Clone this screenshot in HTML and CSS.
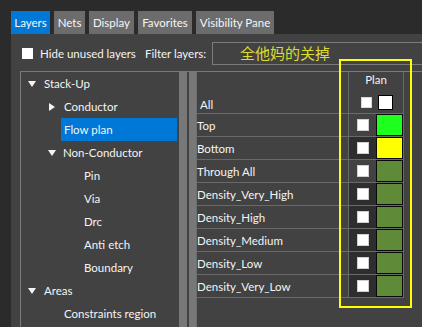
FILE: index.html
```html
<!DOCTYPE html>
<html>
<head>
<meta charset="utf-8">
<link rel="stylesheet" href="styles.css">
</head>
<body>
<div class="app">
  <div class="tabs">
    <div class="tab active t-layers">Layers</div>
    <div class="tab t-nets">Nets</div>
    <div class="tab t-display">Display</div>
    <div class="tab t-fav">Favorites</div>
    <div class="tab t-vis">Visibility Pane</div>
  </div>
  <div class="panel">
    <div class="toolbar">
      <span class="cb-hide"></span>
      <span class="lbl hide-lbl">Hide unused layers</span>
      <span class="lbl filter-lbl">Filter layers:</span>
      <div class="filter">全他妈的关掉</div>
    </div>
    <div class="main">
      <div class="tree">
        <div class="trow lv0"><span class="arrow down"></span><span>Stack-Up</span></div>
        <div class="trow lv1"><span class="arrow right"></span><span>Conductor</span></div>
        <div class="trow sel-row"><span class="sel">Flow plan</span></div>
        <div class="trow lv1b"><span class="arrow down"></span><span>Non-Conductor</span></div>
        <div class="trow lv2"><span>Pin</span></div>
        <div class="trow lv2"><span>Via</span></div>
        <div class="trow lv2"><span>Drc</span></div>
        <div class="trow lv2"><span>Anti etch</span></div>
        <div class="trow lv2"><span>Boundary</span></div>
        <div class="trow lv0"><span class="arrow down"></span><span>Areas</span></div>
        <div class="trow lv1t"><span>Constraints region</span></div>
      </div>
      <div class="sb"></div>
      <div class="sb-gap"></div>
      <div class="sb sb2"></div>
      <div class="grid">
        <div class="th">
          <div class="name all">All</div>
          <div class="plan">
            <div class="plan-lbl">Plan</div>
            <div class="all-cbs"><span class="cb-small"></span><span class="cb-big"></span></div>
          </div>
        </div>
        <div class="tr"><div class="name">Top</div><div class="cbcell"><span class="cb"></span></div><div class="swcell"><span class="sw green"></span></div></div>
        <div class="tr"><div class="name">Bottom</div><div class="cbcell dark"><span class="cb"></span></div><div class="swcell"><span class="sw yellow"></span></div></div>
        <div class="tr"><div class="name">Through All</div><div class="cbcell"><span class="cb"></span></div><div class="swcell"><span class="sw olive"></span></div></div>
        <div class="tr"><div class="name">Density_Very_High</div><div class="cbcell dark"><span class="cb"></span></div><div class="swcell"><span class="sw olive"></span></div></div>
        <div class="tr"><div class="name">Density_High</div><div class="cbcell dark"><span class="cb"></span></div><div class="swcell"><span class="sw olive"></span></div></div>
        <div class="tr"><div class="name">Density_Medium</div><div class="cbcell dark"><span class="cb"></span></div><div class="swcell"><span class="sw olive"></span></div></div>
        <div class="tr"><div class="name">Density_Low</div><div class="cbcell dark"><span class="cb"></span></div><div class="swcell"><span class="sw olive"></span></div></div>
        <div class="tr"><div class="name">Density_Very_Low</div><div class="cbcell dark"><span class="cb"></span></div><div class="swcell"><span class="sw olive"></span></div></div>
      </div>
    </div>
    <div class="annot"></div>
  </div>
</div>
</body>
</html>
```
FILE: styles.css
```css
* { box-sizing: border-box; }
html, body { margin: 0; padding: 0; }
body {
  width: 422px;
  height: 327px;
  overflow: hidden;
  background: #2b2b2b;
  font-family: Lato, "Noto Sans", sans-serif;
  font-size: 11.5px;
  color: #f4f4f4;
}
.app { padding: 11px 0 0 11px; }
.tabs { display: flex; gap: 4px; height: 23px; }
.tab {
  background: #6c6c6c;
  line-height: 23px;
  text-align: center;
  color: #f6f6f6;
  white-space: nowrap;
  flex: none;
}
.t-layers { width: 39px; }
.t-nets { width: 31px; }
.t-display { width: 45px; }
.t-fav { width: 54px; }
.t-vis { width: 78px; }
.tab.active { background: #0078d7; }
.panel {
  position: relative;
  background: #424242;
  height: 293px;
  overflow: hidden;
}
.toolbar {
  display: flex;
  align-items: center;
  height: 37px;
  padding-left: 11px;
  padding-top: 1px;
}
.cb-hide {
  width: 11px; height: 11px;
  background: #fff;
  flex: none;
}
.lbl { white-space: nowrap; }
.hide-lbl { margin-left: 7px; width: 98px; }
.filter-lbl { margin-left: 7px; width: 60px; }
.filter {
  margin-left: 7px;
  flex: 1;
  height: 23px;
  margin-right: -20px;
  border: 1px solid #7c7c7c;
  padding-left: 27px;
  font-family: "Noto Sans CJK SC", sans-serif;
  font-size: 15px;
  line-height: 20px;
  color: #dcdc2c;
}
.main {
  display: flex;
  margin-left: 9px;
  border-top: 1px solid #7a7a7a;
  border-left: 1px solid #7a7a7a;
  height: 256px;
}
.tree { width: 158px; flex: none; }
.trow {
  height: 23px;
  display: flex;
  align-items: center;
  white-space: nowrap;
}
.lv0 { padding-left: 7px; }
.lv0 .arrow { margin-right: 8px; }
.lv1 { padding-left: 28px; }
.lv1 .arrow { margin-right: 9px; }
.lv1b { padding-left: 27px; }
.lv1b .arrow { margin-right: 7px; border-left-width: 4.5px; border-right-width: 4.5px; }
.lv1t { padding-left: 43px; }
.lv2 { padding-left: 63px; }
.sel-row { padding-left: 40px; padding-right: 2px; }
.sel {
  flex: 1;
  height: 23px;
  line-height: 23px;
  background: #0078d7;
  padding-left: 3px;
}
.arrow { width: 0; height: 0; flex: none; }
.arrow.down {
  border-left: 4px solid transparent;
  border-right: 4px solid transparent;
  border-top: 6px solid #f4f4f4;
}
.arrow.right {
  border-top: 4.5px solid transparent;
  border-bottom: 4.5px solid transparent;
  border-left: 6px solid #f4f4f4;
}
.sb { width: 8px; flex: none; background: #787878; }
.sb-gap { width: 2px; flex: none; }
.sb2 { width: 7px; }
.grid {
  border-left: 1px solid #6e6e6e;
  width: 208px;
  flex: none;
}
.th, .tr {
  display: flex;
  border-bottom: 1px solid #6a6a6a;
  width: 207px;
}
.th { height: 42px; }
.tr { height: 23px; }
.name {
  width: 152px;
  flex: none;
  border-right: 1px solid #6a6a6a;
  display: flex;
  align-items: center;
  white-space: nowrap;
}
.name.all { align-items: flex-end; padding-left: 3px; padding-bottom: 2px; }
.plan {
  width: 55px;
  flex: none;
  border-right: 1px solid #6a6a6a;
}
.plan-lbl {
  text-align: center;
  line-height: 15px;
}
.all-cbs {
  display: flex;
  align-items: center;
  margin-top: 8px;
  padding-left: 12px;
  gap: 6px;
}
.cb-small { width: 11px; height: 11px; background: #fff; border: 1px solid #d8d8d8; }
.cb-big { width: 15px; height: 15px; background: #fff; border: 1px solid #000; }
.cbcell {
  width: 27px;
  flex: none;
  display: flex;
  align-items: center;
  justify-content: center;
}
.cbcell.dark { background: #2e2e2e; }
.cb { width: 12px; height: 12px; background: #fff; border: 1px solid #d0d0d0; margin-top: -1px; }
.swcell {
  width: 28px;
  flex: none;
  border-right: 1px solid #6a6a6a;
  display: flex;
}
.sw { width: 27px; height: 22px; border: 1px solid #0a0a0a; }
.green { background: #1eff1e; }
.yellow { background: #ffff00; }
.olive { background: #5f8a38; }
.annot {
  position: absolute;
  left: 328px;
  top: 25px;
  width: 73px;
  height: 249px;
  border: 2px solid #ffff00;
  pointer-events: none;
}
```
